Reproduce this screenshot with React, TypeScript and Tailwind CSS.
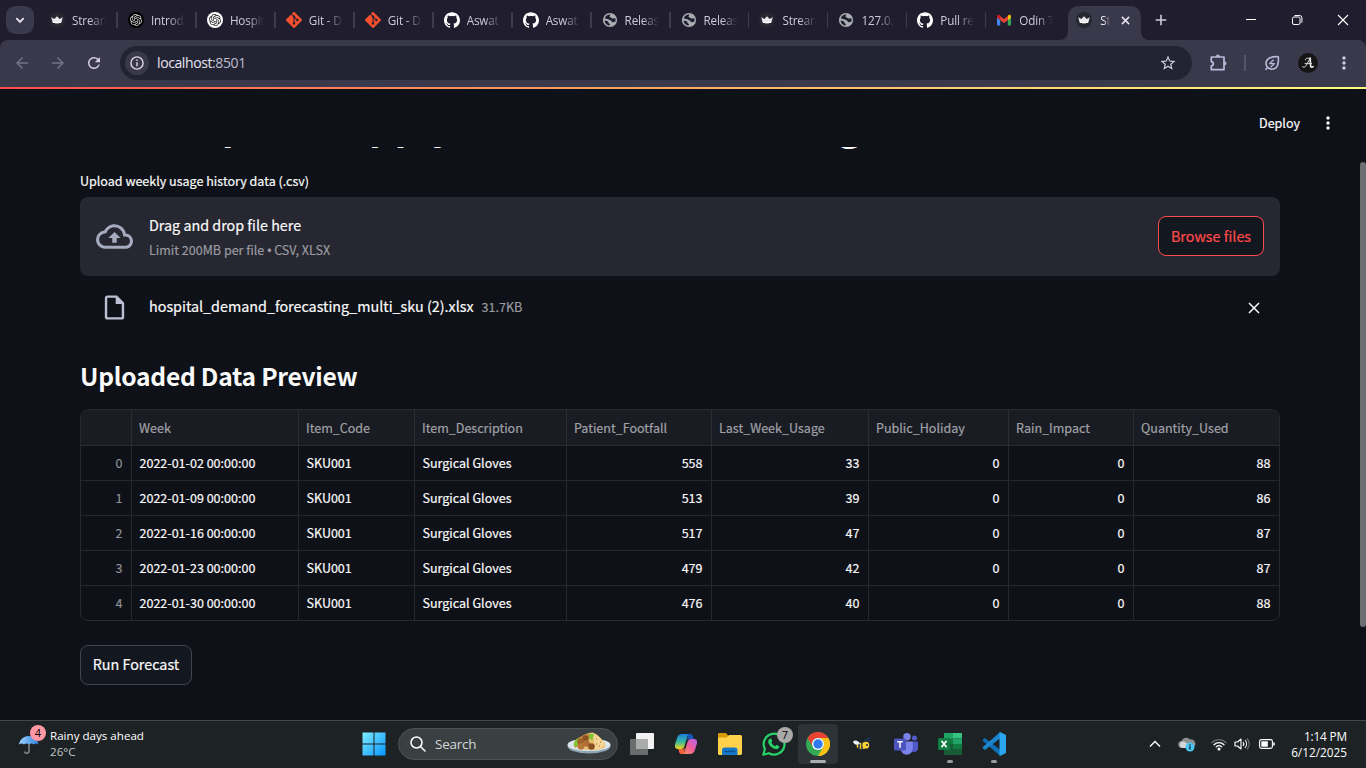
import React from "react";
import { SiGit, SiGithub, SiOpenai } from "react-icons/si";
import {
  MdArrowBack,
  MdArrowForward,
  MdRefresh,
  MdStarOutline,
  MdMoreVert,
} from "react-icons/md";

type TabKind = "crown" | "gptDark" | "gptLight" | "git" | "github" | "globe" | "gmail";

const TABS: { kind: TabKind; label: string }[] = [
  { kind: "crown", label: "Stream" },
  { kind: "gptDark", label: "Introd" },
  { kind: "gptLight", label: "Hospit" },
  { kind: "git", label: "Git - D" },
  { kind: "git", label: "Git - D" },
  { kind: "github", label: "Aswat" },
  { kind: "github", label: "Aswat" },
  { kind: "globe", label: "Releas" },
  { kind: "globe", label: "Releas" },
  { kind: "crown", label: "Stream" },
  { kind: "globe", label: "127.0.0" },
  { kind: "github", label: "Pull re" },
  { kind: "gmail", label: "Odin T" },
];

function Crown() {
  return (
    <svg viewBox="0 0 16 16" className="size-4 shrink-0">
      <circle cx="8" cy="8" r="8" fill="#262730" />
      <path d="M2.2 5.2 5.3 7 8 4.2 10.7 7l3.100-1.800-1.600 5.600c-1.200.6-7.200.6-8.400 0z" fill="#e8e8ea" />
      <path d="M3.600 9.300c2.500.8 6.300.8 8.800 0l-.4 1.500c-1.200.6-6.800.6-8 0z" fill="#fff" />
    </svg>
  );
}

function Globe() {
  return (
    <svg viewBox="0 0 16 16" className="size-4 shrink-0">
      <circle cx="8" cy="8" r="7.100" fill="#a9adb0" />
      <path d="M8.600 2.500c-2.600-.3-4.900 1.200-5.700 3.500.7 1 1.600.8 2.600 1 1.200.2 1.700 1 2.700 1.200.9.200 1.400.6 1.500 1.300.2.800 1.300.8 2 .4.8-.4 1.300.1 1.700-.4.300-1 .3-2.200-.1-3.200-.9-.4-1.700.3-2.600.2-1-.1-1.300-.9-2.200-1.100-.8-.2-1.200-.6-.9-1.300.2-.6.700-1 1-1.600z" fill="#1f1d2e" />
      <path d="M2.600 8.600c.1 2.400 1.800 4.500 4.300 5 .8.100 1.200-.7.9-1.500-.3-.7-1.200-.9-1.400-1.700-.3-1-.9-1.500-1.900-1.500-.8 0-1.200-.4-1.900-.3z" fill="#1f1d2e" />
    </svg>
  );
}

function Gmail() {
  return (
    <svg viewBox="0 0 16 16" className="size-4 shrink-0">
      <path d="M1 4.200v8.300c0 .6.400 1 1 1h2.200V6.400z" fill="#4285f4" />
      <path d="M15 4.200v8.300c0 .6-.4 1-1 1h-2.200V6.400z" fill="#34a853" />
      <path d="M11.800 4.300v3.900L15 5.800V4.200c0-1.400-1.500-2-2.500-1.200z" fill="#fbbc04" />
      <path d="M1 4.200v1.600l3.200 2.400V4.300L3.500 3C2.500 2.200 1 2.800 1 4.200z" fill="#c5221f" />
      <path d="M4.200 8.200V4.100L8 7l3.800-2.900v4.100L8 11z" fill="#ea4335" />
    </svg>
  );
}

function Favicon({ kind }: { kind: TabKind }) {
  switch (kind) {
    case "crown":
      return <Crown />;
    case "gptDark":
      return (
        <span className="flex size-4 shrink-0 items-center justify-center rounded-full bg-black">
          <SiOpenai className="size-3 text-[#d8d8d8]" />
        </span>
      );
    case "gptLight":
      return (
        <span className="flex size-4 shrink-0 items-center justify-center rounded-full bg-white">
          <SiOpenai className="size-3 text-[#222222]" />
        </span>
      );
    case "git":
      return <SiGit className="size-4 shrink-0 text-[#f4502f]" />;
    case "github":
      return <SiGithub className="size-4 shrink-0 text-white" />;
    case "globe":
      return <Globe />;
    default:
      return <Gmail />;
  }
}

function TabStrip() {
  return (
    <div className="flex h-10 shrink-0 bg-[#1f1d2e] font-['Open_Sans',sans-serif]">
      <div className="flex w-[39px] shrink-0 items-center pl-1.5">
        <div className="flex size-7 items-center justify-center rounded-[9px] bg-[#3a394b]">
          <svg viewBox="0 0 10 10" className="size-2.5" fill="none" stroke="#e6e3f2" strokeWidth="1.800">
            <path d="M1.300 3.200 5 6.900l3.700-3.700" />
          </svg>
        </div>
      </div>
      {TABS.map((t, i) => (
        <div key={i} className="flex w-[78.95px] shrink-0 items-center pl-[10px]">
          <Favicon kind={t.kind} />
          <div className="ml-[7px] w-[35px] overflow-hidden whitespace-nowrap text-[11.700px] leading-5 tracking-[-0.150px] text-[#cfcbe0] [mask-image:linear-gradient(to_right,black_50%,transparent_97%)]">
            {t.label}
          </div>
          {i < 12 && <div className="ml-auto h-4 w-[1.500px] bg-[#3d3b4d]" />}
        </div>
      ))}
      <div className="-ml-[5px] flex items-end">
        <svg viewBox="0 0 8 8" className="size-2" fill="#3a394b"><path d="M8 0v8H0a8 8 0 0 0 8-8z" /></svg>
        <div className="flex h-[34px] w-[73px] items-center rounded-t-[10px] bg-[#3a394b] pb-1.5 pl-2">
          <Crown />
          <div className="ml-2 w-[10px] overflow-hidden whitespace-nowrap text-[11.700px] leading-5 text-[#ebe8f5] [mask-image:linear-gradient(to_right,black_40%,transparent)]">
            St
          </div>
          <svg viewBox="0 0 10 10" className="ml-[11px] size-[9px]" stroke="#e6e3f2" strokeWidth="1.700">
            <path d="m1 1 8 8M9 1 1 9" />
          </svg>
        </div>
        <svg viewBox="0 0 8 8" className="size-2" fill="#3a394b"><path d="M0 0v8h8a8 8 0 0 1-8-8z" /></svg>
      </div>
      <div className="flex flex-1 items-center pl-[6px]">
        <svg viewBox="0 0 12 12" className="size-3" stroke="#cfcbe0" strokeWidth="1.600">
          <path d="M6 .7v10.600M.7 6h10.600" />
        </svg>
        <svg viewBox="0 0 12 12" className="ml-auto size-3" stroke="#fff" strokeWidth="1">
          <path d="M1 5.500h10" />
        </svg>
        <svg viewBox="0 0 12 12" className="ml-[34px] size-3" fill="none" stroke="#fff">
          <rect x="1.500" y="3" width="7.500" height="7.500" rx="1.500" />
          <path d="M3.500 1.500h5.200a2.200 2.200 0 0 1 2.200 2.200v5" />
        </svg>
        <svg viewBox="0 0 12 12" className="mr-[17px] ml-[34px] size-3" stroke="#fff" strokeWidth="1.100">
          <path d="m1 1 10 10M11 1 1 11" />
        </svg>
      </div>
    </div>
  );
}

function Toolbar() {
  return (
    <div className="shrink-0 bg-[#1f1d2e]">
      <div className="flex h-[47px] items-center rounded-t-lg bg-[#3a394b] pb-px font-['Open_Sans',sans-serif]">
        <MdArrowBack className="ml-[13px] size-[18px] text-[#737184]" />
        <MdArrowForward className="ml-[18px] size-[18px] text-[#737184]" />
        <MdRefresh className="ml-[18px] size-[18px] text-[#cfcbe0]" />
        <div className="ml-[17px] flex h-[34px] w-[1072px] items-center rounded-full bg-[#232433] pl-[5px]">
          <div className="flex size-6 items-center justify-center rounded-full bg-[#3a394b]">
            <svg viewBox="0 0 14 14" className="size-[14px]" fill="none" stroke="#dcd9e8" strokeWidth="1.400">
              <circle cx="7" cy="7" r="6.100" />
              <path d="M7 6.200v4M7 3.600v1.400" />
            </svg>
          </div>
          <span className="ml-2 text-[14px] leading-5 tracking-[-0.400px] text-[#e6e4ee]">
            localhost<span className="text-[#bfbccd]">:8501</span>
          </span>
          <MdStarOutline className="mr-[15px] ml-auto size-[18px] text-[#cfcbe0]" />
        </div>
        <svg viewBox="0 0 18 18" className="ml-[17px] size-[18px]" fill="none" stroke="#bdb9dc" strokeWidth="1.700" strokeLinejoin="round">
          <path d="M2.300 3H15v12.700H2.300v-3.900c2.700-.4 2.700-3.900 0-4.200z" />
          <path d="M7.200 2.400a1.700 1.500 0 0 1 3.400 0zM15.600 7.700a1.500 1.700 0 0 1 0 3.400z" fill="#bdb9dc" strokeWidth=".8" />
        </svg>
        <div className="ml-[17px] h-4 w-[1.500px] bg-[#555468]" />
        <svg viewBox="0 0 18 18" className="ml-[17px] size-[18px]" fill="none" stroke="#bdb9dc" strokeWidth="1.600" strokeLinejoin="round">
          <path d="M15.300 2.700c.5 5.800-.2 12.300-6 12.500-3.400.1-6.300-2.400-6.300-5.800 0-5 5.500-7.200 12.300-6.700zM4.800 13.200 2.500 15.800" />
          <path d="M10.600 5.800 6.600 9.600h4.800l-3.800 3.600" strokeWidth="1.300" />
        </svg>
        <div className="ml-[17px] flex size-5 items-center justify-center rounded-full bg-[#141414]">
          <svg viewBox="0 0 14 14" className="size-[14px]" fill="none" stroke="#e8e8e8" strokeLinecap="round">
            <path d="M1.500 10.500c1.500 2.200 3.200 0 4.300-2.200L9 2.500" strokeWidth="1" />
            <path d="M9.200 2.200 9.600 10c.2 1.600 1.400 1.400 2.500.6" strokeWidth="1.700" />
            <path d="M4 7.600h6.500M4.500 4c-.8-1.600 2-2.200 4.500-1.700" strokeWidth=".9" />
          </svg>
        </div>
        <MdMoreVert className="ml-[16px] size-5 text-[#cfcbe0]" />
      </div>
    </div>
  );
}

const COLUMNS = [
  "", "Week", "Item_Code", "Item_Description", "Patient_Footfall",
  "Last_Week_Usage", "Public_Holiday", "Rain_Impact", "Quantity_Used",
];

const ROWS = [
  ["0", "2022-01-02 00:00:00", "SKU001", "Surgical Gloves", "558", "33", "0", "0", "88"],
  ["1", "2022-01-09 00:00:00", "SKU001", "Surgical Gloves", "513", "39", "0", "0", "86"],
  ["2", "2022-01-16 00:00:00", "SKU001", "Surgical Gloves", "517", "47", "0", "0", "87"],
  ["3", "2022-01-23 00:00:00", "SKU001", "Surgical Gloves", "479", "42", "0", "0", "87"],
  ["4", "2022-01-30 00:00:00", "SKU001", "Surgical Gloves", "476", "40", "0", "0", "88"],
];

const GRID = "grid grid-cols-[51px_167px_116px_152px_145px_157px_140px_125px_145px]";

function DataTable() {
  return (
    <div className="mt-4 overflow-hidden rounded-lg border border-[#282a30] text-[12.540px]">
      <div className={`${GRID} h-9 bg-[#1a1c24] text-[#a0a1a6]`}>
        {COLUMNS.map((c, i) => (
          <div key={i} className={`flex items-center border-b border-[#2b2d33] px-[7px] pt-0.5 ${i < 8 ? "border-r" : ""}`}>
            {c}
          </div>
        ))}
      </div>
      {ROWS.map((row, r) => (
        <div key={r} className={`${GRID} ${r < 4 ? "h-[35px]" : "h-[34px]"}`}>
          {row.map((v, i) => (
            <div
              key={i}
              className={`flex items-center border-[#26282e] pr-[8.500px] pl-[7.500px] ${i < 8 ? "border-r" : ""} ${r < 4 ? "border-b" : ""} ${i === 0 || i > 3 ? "justify-end" : ""} ${i === 0 ? "text-[#8f9095]" : "text-[#fafafa]"}`}
            >
              {v}
            </div>
          ))}
        </div>
      ))}
    </div>
  );
}

function StreamlitApp() {
  return (
    <div className="flex min-h-0 flex-1 flex-col bg-[#0e1117] font-['Noto_Sans_CJK_SC',sans-serif] text-[#fafafa] [-webkit-text-stroke:0.200px]">
      <div className="h-0.5 shrink-0 bg-linear-to-r from-[#ff4b4b] to-[#fffd80]" />
      <header className="flex h-[58px] shrink-0 items-center justify-end pt-2.5">
        <span className="text-[12.540px] leading-5">Deploy</span>
        <svg viewBox="0 0 4 14" className="mr-9 ml-[26px] h-3.5 w-1" fill="#fafafa">
          <circle cx="2" cy="2" r="1.700" />
          <circle cx="2" cy="7" r="1.700" />
          <circle cx="2" cy="12" r="1.700" />
        </svg>
      </header>
      <div className="flex min-h-0 flex-1">
        <main className="flex w-[1280px] flex-col overflow-hidden pl-20">
          <h1 className="-mt-[60px] mb-3 flex h-[72px] shrink-0 items-center whitespace-nowrap text-[39.400px] leading-[72px] font-bold [-webkit-text-stroke:0px]">
            <span className="mb-2 w-[68px] shrink-0">🏥</span>Hospital Supply Demand Forecasting
          </h1>
          <div className="text-[12.540px] leading-5">Upload weekly usage history data (.csv)</div>
          <div className="mt-[6px] flex h-[79px] shrink-0 items-center rounded-lg bg-[#262730] px-4">
            <svg viewBox="0 0 24 24" className="mr-4 size-[37px]" fill="#a6abc0">
              <path d="M19.350 10.040A7.490 7.490 0 0 0 12 4C9.110 4 6.600 5.640 5.350 8.040A5.994 5.994 0 0 0 0 14c0 3.310 2.690 6 6 6h13c2.760 0 5-2.240 5-5 0-2.640-2.050-4.780-4.650-4.960zM19 18H6c-2.210 0-4-1.790-4-4 0-2.050 1.530-3.760 3.560-3.970l1.070-.11.5-.95A5.469 5.469 0 0 1 12 6c2.620 0 4.880 1.860 5.390 4.430l.3 1.500 1.530.11A2.980 2.980 0 0 1 22 15c0 1.650-1.350 3-3 3zM8 13h2.550v3h2.900v-3H16l-4-4z" />
            </svg>
            <div className="pt-0.5">
              <div className="text-[14.330px] leading-6">Drag and drop file here</div>
              <div className="mt-px text-[12.540px] leading-6 text-[#9a9ba0]">
                Limit 200MB per file <span className="font-['Liberation_Sans',sans-serif] text-[12px]">•</span> CSV, XLSX
              </div>
            </div>
            <button className="mb-px ml-auto h-10 w-[106px] rounded-lg border border-[#ff4b4b] bg-[#131720] text-[14.330px] text-[#ff4b4b]">
              Browse files
            </button>
          </div>
          <div className="mt-[11px] flex h-10 shrink-0 items-center pr-5 pl-5">
            <svg viewBox="0 0 24 24" className="mr-5 size-[29px]" fill="#bcc0d3">
              <path d="M14 2H6c-1.100 0-1.990.9-1.990 2L4 20c0 1.100.89 2 1.990 2H18c1.100 0 2-.9 2-2V8zM6 20V4h7v5h5v11z" />
            </svg>
            <span className="mb-0.5 text-[14.330px] leading-6">hospital_demand_forecasting_multi_sku (2).xlsx</span>
            <span className="ml-2 text-[12.540px] leading-6 text-[#9a9ba0]">31.7KB</span>
            <svg viewBox="0 0 12 12" className="mt-0.5 ml-auto size-3" stroke="#fafafa" strokeWidth="1.500">
              <path d="m1 1 10 10M11 1 1 11" />
            </svg>
          </div>
          <h3 className="mt-[30px] text-[24.600px] leading-9 font-bold tracking-[-0.250px] [-webkit-text-stroke:0px]">
            Uploaded Data Preview
          </h3>
          <DataTable />
          <button className="mt-6 h-10 w-28 shrink-0 rounded-lg border border-[#41444c] bg-[#131720] pb-0.5 text-[14.330px]">
            Run Forecast
          </button>
        </main>
        <div className="mt-[15px] ml-auto h-[465px] w-1.5 rounded-full bg-[#6c6d70]" />
      </div>
    </div>
  );
}

function Umbrella() {
  return (
    <svg viewBox="0 0 22 22" className="size-[22px]">
      <defs>
        <linearGradient id="umb" x1="0" y1="0" x2="1" y2="0">
          <stop offset="0" stopColor="#9fd0ff" />
          <stop offset="1" stopColor="#2f83dd" />
        </linearGradient>
      </defs>
      <path d="M11 10v8.500a2.300 2.300 0 0 1-4.500 0" fill="none" stroke="#8b8d90" strokeWidth="1.400" />
      <path d="M1 11.500C2 6 6 3 11 3s8.500 3 9.500 8.500c-1.500-1.200-3.400-1.200-4.800 0-1.400-1.300-3.300-1.300-4.700 0-1.400-1.300-3.500-1.300-5 0-1.500-1.200-3.500-1.200-5 0z" fill="url(#umb)" />
    </svg>
  );
}

function Falafel() {
  return (
    <svg viewBox="0 0 44 24" className="h-6 w-11">
      <ellipse cx="22" cy="15" rx="21.500" ry="7.500" fill="#8fa3b3" />
      <ellipse cx="22" cy="13.700" rx="21.500" ry="6.300" fill="#dbe5ec" />
      <path d="M8 15c3-8 9-12.500 17-13.500 4 .5 7 4 10 7s4.500 7 2 8.500c-7 3-22 3-29-2z" fill="#e9bc72" />
      <path d="M25 2c5 1 11 7 13 12-3 3.500-7 4.500-12 4.500 2-5 1.500-11-1-16.500z" fill="#f4d595" />
      <path d="M7 14c0-4 3-6.500 6-8L20 2.500l4 1.500-4 6-12 7z" fill="#c98a3c" />
      <path d="m22 3 5 0-1.500 6.500-3.500-2zM6.500 14c.5-4 3-6.500 5.500-7l1 4-4 5z" fill="#82c534" />
      <circle cx="18.500" cy="7.500" r="3.200" fill="#8a5022" />
      <circle cx="13.500" cy="10.500" r="3.200" fill="#a2622c" />
      <circle cx="14" cy="15.500" r="3.300" fill="#b9773a" />
      <circle cx="19.500" cy="12.500" r="3.300" fill="#b06f36" />
      <circle cx="24.500" cy="15.500" r="3.300" fill="#8a5022" />
      <path d="M29 8h1M33 11h1M29 13h1M32 15h1" stroke="#9b6b31" />
    </svg>
  );
}

function Copilot() {
  return (
    <svg viewBox="0 0 24 24" className="size-6">
      <defs>
        <linearGradient id="cpA" x1="0" y1="0" x2="0" y2="1">
          <stop offset="0" stopColor="#1b7fe0" />
          <stop offset=".5" stopColor="#32b8a0" />
          <stop offset="1" stopColor="#f0d21c" />
        </linearGradient>
        <linearGradient id="cpB" x1="1" y1="0" x2="0" y2="1">
          <stop offset="0" stopColor="#b264f0" />
          <stop offset=".5" stopColor="#f25c9b" />
          <stop offset="1" stopColor="#fb9a55" />
        </linearGradient>
      </defs>
      <path d="M8 2h8c-1.500 0-2.300 1.200-2.800 2.800l-2.500 8.700C10 15.800 9 17 7 17H4c-3 0-3.600-2.500-2.700-5.500l2-6C4 3.300 5.500 2 8 2z" fill="url(#cpA)" />
      <path d="M14 2h2.500c1.300 0 2 .8 2.400 2l.9 3H16c-1.500 0-2.400.4-3 2z" fill="#1756b8" />
      <path d="M16 22H8c1.500 0 2.300-1.200 2.800-2.800l2.500-8.700C14 8.200 15 7 17 7h3c3 0 3.600 2.500 2.700 5.500l-2 6c-.7 2.200-2.200 3.500-4.700 3.500z" fill="url(#cpB)" />
      <path d="M10 22H7.500c-1.300 0-2-.8-2.400-2l-.9-3H8c1.500 0 2.400-.4 3-2z" fill="#f2643d" />
    </svg>
  );
}

function Explorer() {
  return (
    <svg viewBox="0 0 24 22" className="h-[22px] w-6">
      <path d="M0 1.500C0 .7.500 0 1.500 0H8l2.500 3H10v4H0z" fill="#d99a06" />
      <path d="M0 4.500h8.500L11 2h11.500c.8 0 1.500.6 1.500 1.500v17c0 .8-.7 1.500-1.500 1.500h-21C.7 22 0 21.300 0 20.500z" fill="#ffd04a" />
      <path d="M4 22v-5c0-1.500 1-2.500 2.500-2.500h10.500c1.500 0 2.500 1 2.500 2.500v5z" fill="#1778c8" />
      <path d="M7 18.500h9.500" stroke="#0b4f8f" strokeWidth="1.500" strokeLinecap="round" />
    </svg>
  );
}

function WhatsApp() {
  return (
    <svg viewBox="0 0 24 24" className="size-6">
      <path d="M1.300 22.700 2.900 17A10.400 10.400 0 1 1 7 21.200z" fill="none" stroke="#25d366" strokeWidth="2.200" strokeLinejoin="round" />
      <path d="M8.200 6.500c.5-.1 1 0 1.200.5l.8 1.900c.1.400 0 .7-.9 1.700.8 1.700 2 2.900 3.900 3.700.9-1.100 1.200-1.500 1.600-1.300l2.100 1c.4.200.5.500.2 1.400-.4 1.200-1.900 1.900-3.200 1.700-3.700-.7-7.300-4.200-7.700-7.200-.1-1.600.8-3.200 2-3.400z" fill="#25d366" />
    </svg>
  );
}

function Chrome() {
  return (
    <svg viewBox="0 0 24 24" className="size-6">
      <circle cx="12" cy="12" r="12" fill="#34a853" />
      <path d="M1.600 6A12 12 0 0 1 22.400 6H12a6 6 0 0 0-5.200 9z" fill="#ea4335" />
      <path d="M22.400 6A12 12 0 0 1 12 24l5.200-9A6 6 0 0 0 12 6z" fill="#fbc116" />
      <circle cx="12" cy="12" r="6" fill="#fff" />
      <circle cx="12" cy="12" r="4.700" fill="#3079ee" />
    </svg>
  );
}

function Bee() {
  return (
    <svg viewBox="0 0 20 16" className="h-4 w-5">
      <path d="M12 5c2-2 3-2.500 7-3.500M15 5l4-.5" stroke="#1d3a5c" fill="none" strokeWidth="1.200" />
      <ellipse cx="9.500" cy="10" rx="5" ry="3.300" fill="#f6c524" />
      <path d="M7 7v6M10 6.800v6.600" stroke="#20304a" strokeWidth="1.600" />
      <circle cx="13.800" cy="9.200" r="3.400" fill="#fbd22f" />
      <circle cx="15" cy="9" r="1.100" fill="#20304a" />
      <path d="M1 5.800c1.500-1.800 4.500-1.800 7 1.700-2.500 2-6 1.500-7-1.700z" fill="#eaf4fb" />
    </svg>
  );
}

function Teams() {
  return (
    <svg viewBox="0 0 24 22" className="h-[22px] w-6">
      <circle cx="20.500" cy="5" r="2.600" fill="#5059c9" />
      <circle cx="13" cy="3.700" r="3.700" fill="#7b83eb" />
      <path d="M17 8.500h6c.6 0 1 .4 1 1v5.500c0 2.500-2 4-4 4s-3-1-3-2.500z" fill="#5059c9" />
      <path d="M8 8.500h9.500c.7 0 1.200.5 1.200 1.200v6a6 6 0 0 1-12 0V9.500z" fill="#7b83eb" />
      <rect x="0" y="5.500" width="12" height="12" rx="1.200" fill="#4b53bc" />
      <path d="M3.300 8.800h5.400M6 8.800v6" stroke="#fff" strokeWidth="1.500" />
    </svg>
  );
}

function Excel() {
  return (
    <svg viewBox="0 0 24 22" className="h-[22px] w-6">
      <path d="M6 1c0-.6.400-1 1-1h8v22H7c-.6 0-1-.4-1-1z" fill="#21a366" />
      <path d="M15 0h8c.6 0 1 .4 1 1v4.500h-9z" fill="#33c481" />
      <path d="M6 5.500h9V11H6zM15 11h9v5.500h-9z" fill="#107c41" />
      <path d="M15 5.500h9V11h-9z" fill="#21a366" />
      <path d="M6 11h9v5.500h9V21c0 .6-.4 1-1 1H7c-.6 0-1-.4-1-1z" fill="#185c37" />
      <rect x="0" y="5" width="12" height="12" rx="1" fill="#107c41" />
      <path d="m3.400 7.800 5.200 6.400M8.600 7.800l-5.200 6.400" stroke="#fff" strokeWidth="1.700" />
    </svg>
  );
}

function VsCode() {
  return (
    <svg viewBox="0 0 24 24" className="size-6">
      <path d="M1 7.500 2.300 6.400c.4-.3.900-.3 1.200 0L18 17.500v6.200L.9 8.900c-.4-.4-.4-1 .1-1.400z" fill="#0f6fb5" />
      <path d="m1 16.500 1.300 1.100c.4.300.9.300 1.200 0L18 6.500V.3L.9 15.100c-.4.400-.4 1 .1 1.400z" fill="#1b85cf" />
      <path d="M17.500.2c.3-.2.700-.2 1 0L23.200 2.500c.5.300.8.800.8 1.300v16.400c0 .5-.3 1-.8 1.300l-4.700 2.300c-.3.200-.7.200-1 0z" fill="#2aa5f0" />
    </svg>
  );
}

function Slot({ children, mark }: { children: React.ReactNode; mark?: "wide" | "dot" }) {
  return (
    <div className={`relative flex size-10 shrink-0 items-center justify-center rounded ${mark === "wide" ? "bg-[#2e3337]" : ""}`}>
      {children}
      {mark === "wide" && <span className="absolute bottom-px left-3 h-[3px] w-4 rounded-full bg-[#acadae]" />}
      {mark === "dot" && <span className="absolute bottom-px left-[17px] h-[3px] w-1.5 rounded-full bg-[#9a9c9d]" />}
    </div>
  );
}

function Taskbar() {
  return (
    <div className="flex h-12 shrink-0 items-center border-t border-[#44474a] bg-[#1d2225] pb-px font-['Open_Sans',sans-serif] text-white">
      <div className="relative flex w-[50px] shrink-0 items-center pl-[18px]">
        <Umbrella />
        <span className="absolute -top-[8px] left-[30px] flex size-4 items-center justify-center rounded-full bg-[#ff98a4] text-[11px] leading-4 text-black">
          4
        </span>
      </div>
      <div className="w-[303.500px] shrink-0 pb-px text-[11.600px] leading-4">
        <div>Rainy days ahead</div>
        <div className="text-[#c3c6c8]">26°C</div>
      </div>
      <Slot>
        <svg viewBox="0 0 24 24" className="size-6">
          <defs>
            <linearGradient id="win" x1="0" y1="0" x2="1" y2="1">
              <stop offset="0" stopColor="#7fecff" />
              <stop offset="1" stopColor="#0596ff" />
            </linearGradient>
          </defs>
          <path d="M.5.5h11v11H.5zM12.500.5h11v11h-11zM.5 12.500h11v11H.5zM12.500 12.500h11v11h-11z" fill="url(#win)" />
        </svg>
      </Slot>
      <div className="ml-[4.500px] flex h-8 w-[220px] shrink-0 items-center rounded-full border border-[#4c5153] bg-[#3a3f42] pl-[10.500px]">
        <svg viewBox="0 0 16 16" className="size-4" fill="none" stroke="#fff" strokeWidth="1.500" strokeLinecap="round">
          <circle cx="6.500" cy="6.500" r="5.500" />
          <path d="m10.700 10.700 4.300 4.300" />
        </svg>
        <span className="ml-[9.500px] text-[13.500px] leading-5 tracking-[-0.250px] text-[#d3d6d8]">Search</span>
        <div className="mr-[6px] ml-auto pb-0.5"><Falafel /></div>
      </div>
      <div className="ml-1 flex gap-1">
        <Slot>
          <svg viewBox="0 0 24 22" className="h-[22px] w-6">
            <rect x="6" y="0" width="18" height="16" rx="1" fill="#f2f2f2" />
            <rect x="0" y="6" width="18" height="16" rx="1" fill="#6a6c6d" />
            <rect x="6" y="6" width="12" height="10" fill="#aaabab" />
          </svg>
        </Slot>
        <Slot><Copilot /></Slot>
        <Slot><Explorer /></Slot>
        <Slot>
          <WhatsApp />
          <span className="absolute top-[3px] right-[1px] flex size-4 items-center justify-center rounded-full bg-[#a8a8a8] text-[11px] leading-4 text-black">
            7
          </span>
        </Slot>
        <Slot mark="wide"><Chrome /></Slot>
        <Slot><Bee /></Slot>
        <Slot><Teams /></Slot>
        <Slot mark="dot"><Excel /></Slot>
        <Slot mark="dot"><VsCode /></Slot>
      </div>
      <div className="mr-[19px] ml-auto flex items-center">
        <svg viewBox="0 0 12 8" className="h-2 w-3" fill="none" stroke="#fff" strokeWidth="1.400">
          <path d="m1 6.500 5-5 5 5" />
        </svg>
        <svg viewBox="0 0 18 16" className="ml-[17px] h-4 w-[18px]">
          <path d="M4 12a3.500 3.500 0 0 1-.5-7A5 5 0 0 1 12 3.500 4.300 4.300 0 0 1 14 12z" fill="#8d8f90" />
          <path d="M4 12a3.500 3.500 0 0 1 0-6.500c3-.5 4 1.500 6 2.500v4z" fill="#d5d6d7" />
          <circle cx="12" cy="11" r="4.500" fill="#4cc2f1" />
          <path d="M12 10.300v3.200M12 8.300v1.200" stroke="#123" strokeWidth="1.300" />
        </svg>
        <svg viewBox="0 0 16 14" className="ml-[15px] h-3.5 w-4" fill="none" stroke="#fff" strokeWidth="1.300" strokeLinecap="round">
          <path d="M1 5.500a10 10 0 0 1 14 0" stroke="#6b6f71" />
          <path d="M3 7.700a7 7 0 0 1 10 0M5.200 9.900a4 4 0 0 1 5.600 0" />
          <circle cx="8" cy="12" r=".9" fill="#fff" />
        </svg>
        <svg viewBox="0 0 16 14" className="ml-[7px] h-3.5 w-4" fill="none" stroke="#fff" strokeWidth="1.100" strokeLinejoin="round">
          <path d="M1 5h2.500L7 2v10L3.500 9H1z" />
          <path d="M9 5a3 3 0 0 1 0 4M11 3a6 6 0 0 1 0 8" />
          <path d="M13 1.500a8 8 0 0 1 0 11" stroke="#6b6f71" />
        </svg>
        <svg viewBox="0 0 16 10" className="ml-[9px] h-2.5 w-4" fill="none" stroke="#fff" strokeWidth="1.100">
          <rect x=".6" y=".6" width="12.800" height="8.800" rx="1.800" />
          <rect x="2.300" y="2.300" width="6.500" height="5.400" fill="#fff" stroke="none" />
          <path d="M15 3.500v3" strokeWidth="1.500" />
        </svg>
        <div className="ml-[16px] pb-px text-right text-[11.800px] leading-4">
          <div className="tracking-[-0.150px]">1:14 PM</div>
          <div>6/12/2025</div>
        </div>
      </div>
    </div>
  );
}

export default function App() {
  return (
    <div className="flex h-[768px] w-[1366px] flex-col overflow-hidden bg-[#0e1117]">
      <TabStrip />
      <Toolbar />
      <StreamlitApp />
      <Taskbar />
    </div>
  );
}
